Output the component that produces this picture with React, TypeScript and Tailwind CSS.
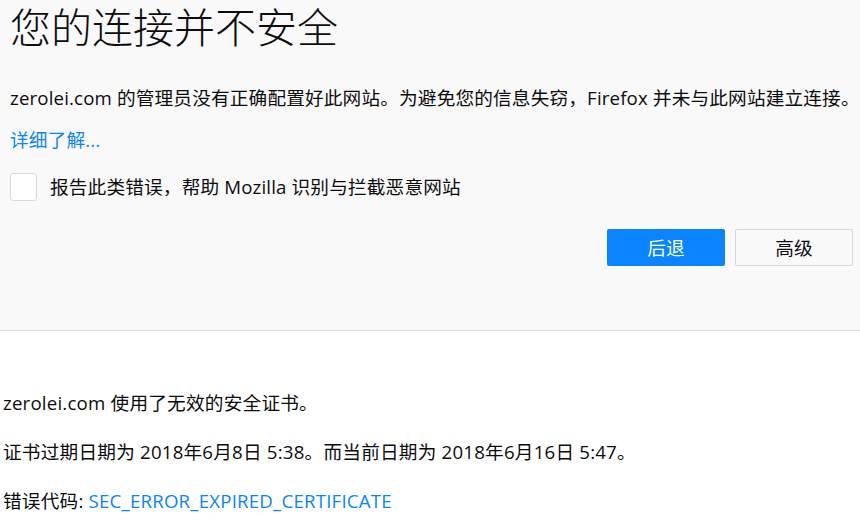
import React from "react";

export default function App() {
  const font = { fontFamily: '"Open Sans", "Noto Sans CJK SC", sans-serif' };
  return (
    <div className="w-[860px] h-[529px] overflow-hidden bg-white text-[#0c0c0d]" style={font}>
      <div className="h-[331px] bg-[#f9f9fa] border-b border-[#d7d7db] pl-[10px] flex flex-col">
        <h1 className="text-[41px] leading-[54px] font-light">您的连接并不安全</h1>
        <p className="text-[18.67px] leading-[26px] mt-[31px] whitespace-nowrap tracking-[0.15px]">
          zerolei.com 的管理员没有正确配置好此网站。为避免您的信息失窃，Firefox 并未与此网站建立连接。
        </p>
        <a className="text-[18.67px] leading-[26px] mt-[16px] text-[#0a84ff] w-fit tracking-[0.15px]">详细了解...</a>
        <label className="flex items-center mt-[20px] gap-[13px]">
          <span className="w-[27px] h-[28px] border border-[#d7d7db] rounded-[3px] bg-white shrink-0" />
          <span className="text-[18.67px] leading-[26px] tracking-[0.15px]">报告此类错误，帮助 Mozilla 识别与拦截恶意网站</span>
        </label>
        <div className="flex justify-end gap-[10px] mt-[28px] pr-[7px]">
          <button className="w-[118px] h-[37px] rounded-[2px] bg-[#0a84ff] text-white text-[18.67px]">后退</button>
          <button className="w-[118px] h-[37px] rounded-[2px] bg-[#f9f9fa] border border-[#d7d7db] text-[#0c0c0d] text-[18.67px]">高级</button>
        </div>
      </div>
      <div className="pl-[3px] text-[18.67px] leading-[26px] tracking-[0.2px] flex flex-col gap-[23px] pt-[59px]">
        <p>zerolei.com 使用了无效的安全证书。</p>
        <p>证书过期日期为 2018年6月8日 5:38。而当前日期为 2018年6月16日 5:47。</p>
        <p>
          错误代码: <a className="text-[#0a84ff]">SEC_ERROR_EXPIRED_CERTIFICATE</a>
        </p>
      </div>
    </div>
  );
}
